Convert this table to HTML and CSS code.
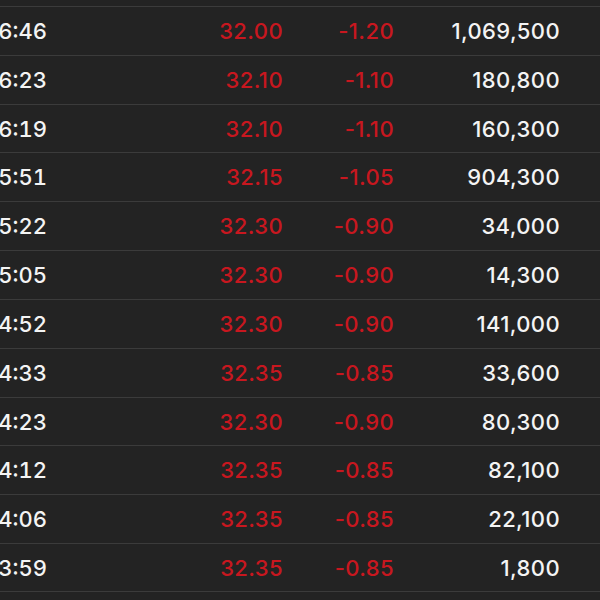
FILE: index.html
```html
<!DOCTYPE html>
<html>
<head>
<meta charset="utf-8">
<link rel="stylesheet" href="styles.css">
</head>
<body>
<div class="list">
  <div class="row"><div class="time"><span>13:26:46</span></div><div class="price">32.00</div><div class="chg">-1.20</div><div class="vol">1,069,500</div></div>
  <div class="row"><div class="time"><span>13:26:23</span></div><div class="price">32.10</div><div class="chg">-1.10</div><div class="vol">180,800</div></div>
  <div class="row"><div class="time"><span>13:26:19</span></div><div class="price">32.10</div><div class="chg">-1.10</div><div class="vol">160,300</div></div>
  <div class="row"><div class="time"><span>13:25:51</span></div><div class="price">32.15</div><div class="chg">-1.05</div><div class="vol">904,300</div></div>
  <div class="row"><div class="time"><span>13:25:22</span></div><div class="price">32.30</div><div class="chg">-0.90</div><div class="vol">34,000</div></div>
  <div class="row"><div class="time"><span>13:25:05</span></div><div class="price">32.30</div><div class="chg">-0.90</div><div class="vol">14,300</div></div>
  <div class="row"><div class="time"><span>13:24:52</span></div><div class="price">32.30</div><div class="chg">-0.90</div><div class="vol">141,000</div></div>
  <div class="row"><div class="time"><span>13:24:33</span></div><div class="price">32.35</div><div class="chg">-0.85</div><div class="vol">33,600</div></div>
  <div class="row"><div class="time"><span>13:24:23</span></div><div class="price">32.30</div><div class="chg">-0.90</div><div class="vol">80,300</div></div>
  <div class="row"><div class="time"><span>13:24:12</span></div><div class="price">32.35</div><div class="chg">-0.85</div><div class="vol">82,100</div></div>
  <div class="row"><div class="time"><span>13:24:06</span></div><div class="price">32.35</div><div class="chg">-0.85</div><div class="vol">22,100</div></div>
  <div class="row"><div class="time"><span>13:23:59</span></div><div class="price">32.35</div><div class="chg">-0.85</div><div class="vol">1,800</div></div>
</div>
</body>
</html>
```
FILE: styles.css
```css
html, body {
  margin: 0;
  padding: 0;
  background: #232323;
  overflow: hidden;
  height: 600px;
}
.list {
  padding-top: 6px;
  font-family: Inter, "Liberation Sans", sans-serif;
  font-size: 22px;
  font-weight: 500;
  letter-spacing: 0.4px;
  color: #f4f4f4;
}
.row {
  display: flex;
  align-items: center;
  box-sizing: border-box;
  height: 48.83px;
  border-top: 1px solid #3b3b3b;
  white-space: nowrap;
}
.row:last-child {
  border-bottom: 1px solid #3b3b3b;
}
.time {
  width: 47px;
  flex: none;
  display: flex;
  justify-content: flex-end;
  font-variant-numeric: tabular-nums;
  letter-spacing: 0;
}
.price, .chg, .vol {
  flex: none;
  text-align: right;
}
.price { width: 236px; color: #c8171f; }
.chg { width: 111px; color: #c8171f; }
.vol { width: 166px; }
```
